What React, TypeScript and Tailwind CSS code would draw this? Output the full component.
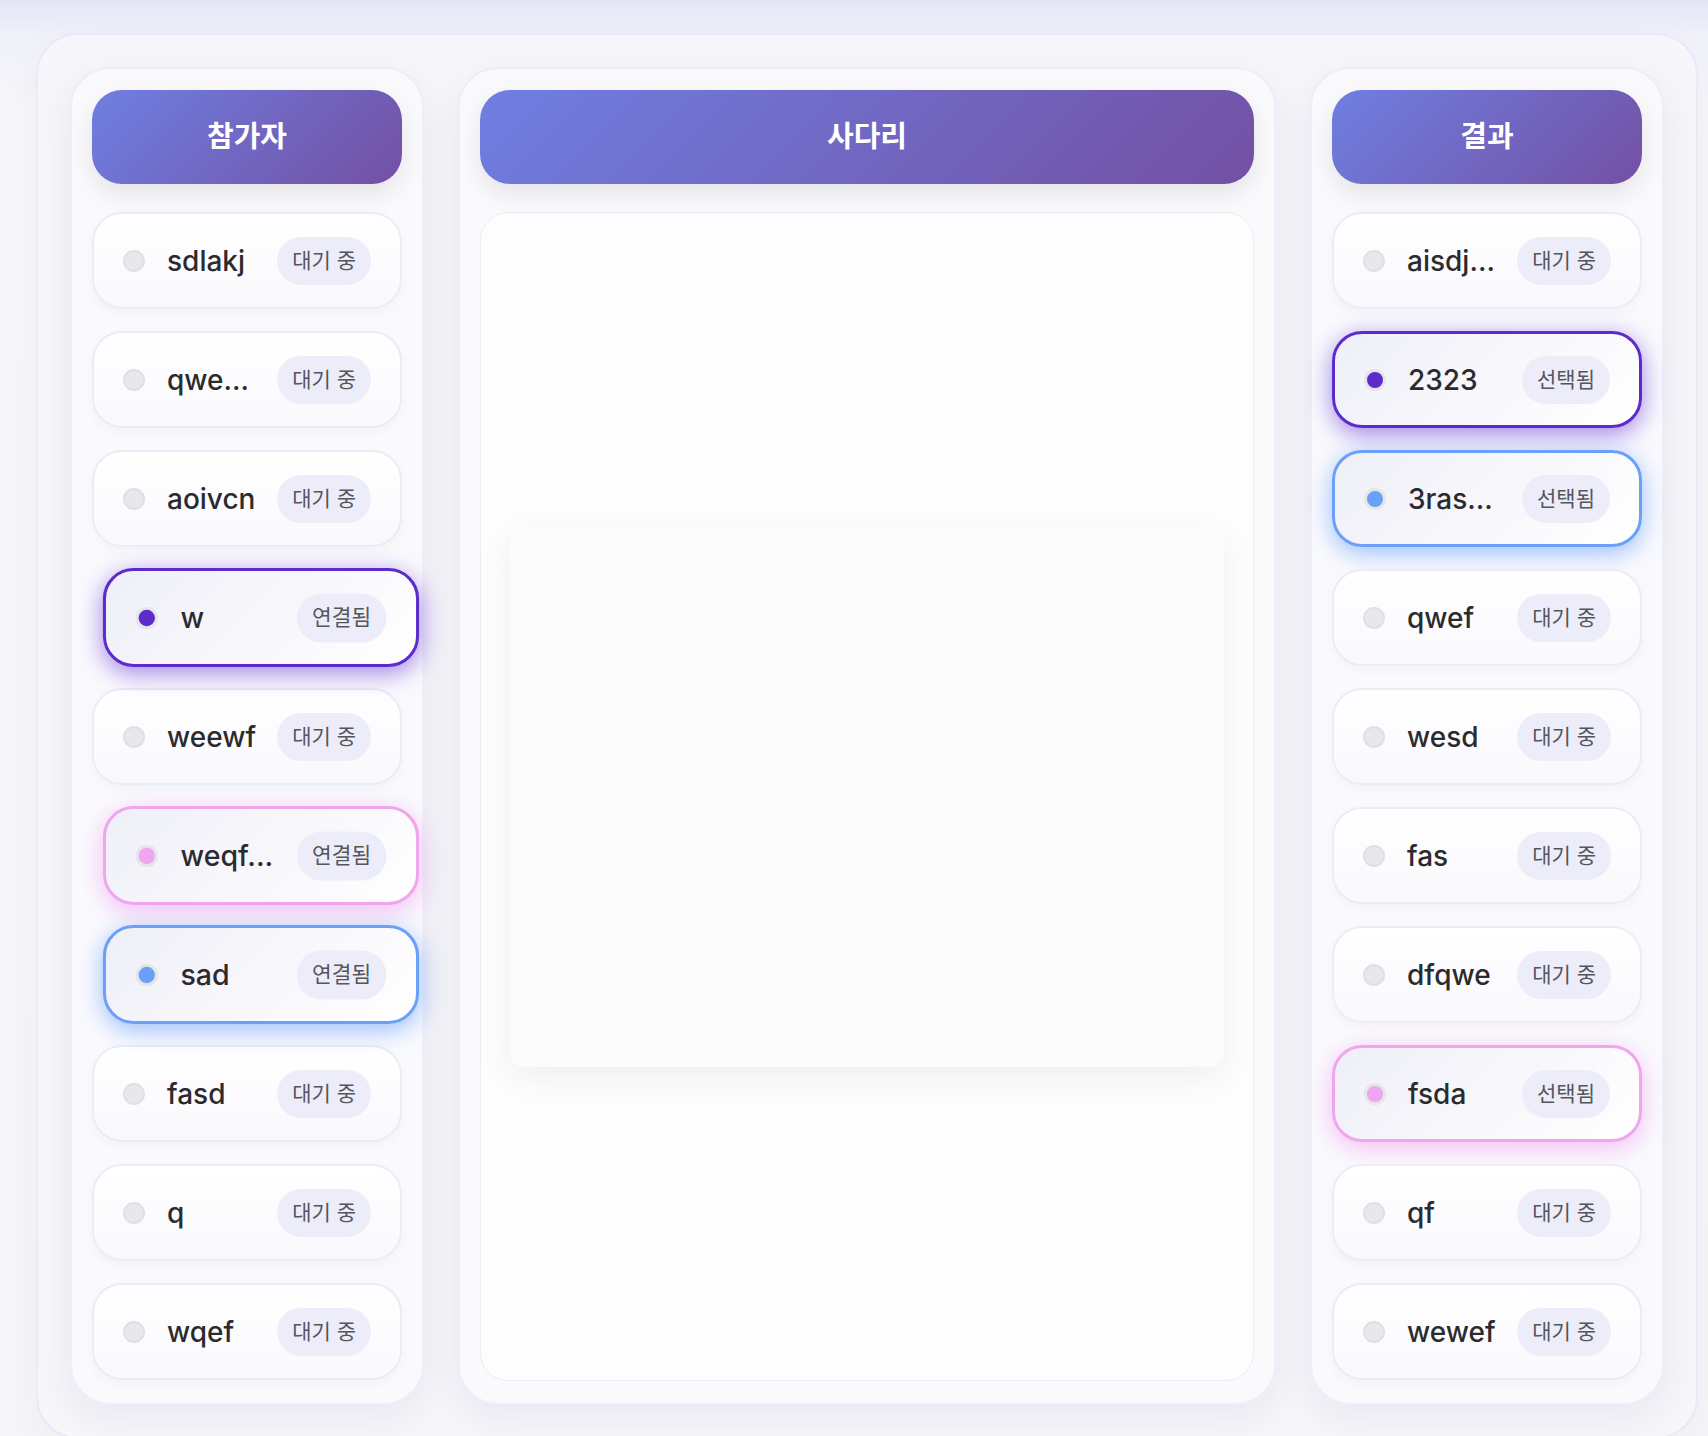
import React from 'react';

type Tone = 'none' | 'purple' | 'pink' | 'blue';

type Entry = { name: string; tone: Tone };

const players: Entry[] = [
    { name: 'sdlakj', tone: 'none' },
    { name: 'qwe...', tone: 'none' },
    { name: 'aoivcn', tone: 'none' },
    { name: 'w', tone: 'purple' },
    { name: 'weewf', tone: 'none' },
    { name: 'weqf...', tone: 'pink' },
    { name: 'sad', tone: 'blue' },
    { name: 'fasd', tone: 'none' },
    { name: 'q', tone: 'none' },
    { name: 'wqef', tone: 'none' },
];

const results: Entry[] = [
    { name: 'aisdj...', tone: 'none' },
    { name: '2323', tone: 'purple' },
    { name: '3ras...', tone: 'blue' },
    { name: 'qwef', tone: 'none' },
    { name: 'wesd', tone: 'none' },
    { name: 'fas', tone: 'none' },
    { name: 'dfqwe', tone: 'none' },
    { name: 'fsda', tone: 'pink' },
    { name: 'qf', tone: 'none' },
    { name: 'wewef', tone: 'none' },
];

const cardTone: Record<Tone, string> = {
    none: 'border-2 border-[#ececf9] bg-[linear-gradient(180deg,#ffffff,#f9f9fd)] shadow-[0_4px_12px_rgba(0,0,0,0.03)]',
    purple: 'border-[3px] border-[#5b2bcc] bg-[linear-gradient(135deg,#efeff8,#ffffff)] shadow-[0_6px_24px_rgba(101,52,214,0.6)]',
    pink: 'border-[3px] border-[#efa6ef] bg-[linear-gradient(135deg,#efeff8,#ffffff)] shadow-[0_6px_24px_rgba(240,150,240,0.6)]',
    blue: 'border-[3px] border-[#6ba0f8] bg-[linear-gradient(135deg,#efeff8,#ffffff)] shadow-[0_6px_24px_rgba(90,150,250,0.6)]',
};

const dotTone: Record<Tone, string> = {
    none: 'border-2 border-[#dfe0e5] bg-[#e7e8ec]',
    purple: 'border-[3px] border-[#e5e5ea] bg-[#5b2bcc]',
    pink: 'border-[3px] border-[#e5e5ea] bg-[#eea6ef]',
    blue: 'border-[3px] border-[#e5e5ea] bg-[#6ba0f8]',
};

function Row({ entry, side }: { entry: Entry; side: 'left' | 'right' }) {
    const active = entry.tone !== 'none';
    const label = !active ? '대기 중' : side === 'left' ? '연결됨' : '선택됨';
    const shift = active && side === 'left' ? 'translate-x-[14px] scale-[1.02]' : '';
    return (
        <div
            className={`h-[97px] rounded-[30px] flex items-center justify-between pl-[29px] pr-[29px] ${cardTone[entry.tone]} ${shift}`}
        >
            <div className="flex items-center gap-[22px] min-w-0">
                <span className={`w-[22px] h-[22px] rounded-full shrink-0 ${dotTone[entry.tone]}`}></span>
                <span className="text-[28px] font-medium text-[#2b2b2e] leading-none whitespace-nowrap">
                    {entry.name}
                </span>
            </div>
            <span className="h-[48px] px-[15px] rounded-full bg-[#ededfa] text-[21px] text-[#55555d] flex items-center whitespace-nowrap">
                {label}
            </span>
        </div>
    );
}

function Header({ title }: { title: string }) {
    return (
        <div className="h-[94px] rounded-[30px] bg-[linear-gradient(135deg,#6f7fe2,#7350a3)] flex items-center justify-center text-white text-[29px] font-bold shadow-[0_10px_24px_rgba(0,0,0,0.09)]">
            {title}
        </div>
    );
}

function SideColumn({ title, list, side }: { title: string; list: Entry[]; side: 'left' | 'right' }) {
    return (
        <div className="rounded-[40px] border-2 border-[#eeeefa] bg-[#fafafd] shadow-[0_12px_40px_rgba(40,30,60,0.07)] px-[20px] pt-[21px] pb-[23px] flex flex-col">
            <Header title={title} />
            <div className="mt-[28px] flex flex-col gap-[22px]">
                {list.map((e, i) => (
                    <Row key={`${side}-${i}`} entry={e} side={side} />
                ))}
            </div>
        </div>
    );
}

export default function App() {
    return (
        <div className="min-h-screen w-full overflow-hidden bg-[linear-gradient(180deg,#e3e5f7_0px,#f1f1fa_36px,#f7f7fb_120px,#f6f5f8_100%)] font-['Inter','Noto_Sans_CJK_KR',sans-serif] pt-[33px]">
            <div className="ml-[36px] w-[1662px] rounded-[42px] border-2 border-[#e9e9f9] bg-[#f6f6fb] shadow-[0_10px_40px_rgba(0,0,0,0.04)] px-[32px] pt-[32px] pb-[32px]">
                <div className="grid grid-cols-[354px_1fr_354px] gap-[34px]">
                    <SideColumn title="참가자" list={players} side="left" />
                    <div className="rounded-[40px] border-2 border-[#eeeefa] bg-[#fafafd] shadow-[0_12px_40px_rgba(40,30,60,0.07)] px-[20px] pt-[21px] pb-[22px] flex flex-col">
                        <Header title="사다리" />
                        <div className="mt-[28px] flex-1 rounded-[28px] border border-[#ebebf8] bg-[#fdfdfe] flex items-center justify-center">
                            <div className="w-[714px] h-[540px] rounded-[14px] bg-[#fcfcfd] shadow-[0_10px_34px_rgba(0,0,0,0.06)]"></div>
                        </div>
                    </div>
                    <SideColumn title="결과" list={results} side="right" />
                </div>
            </div>
        </div>
    );
}
